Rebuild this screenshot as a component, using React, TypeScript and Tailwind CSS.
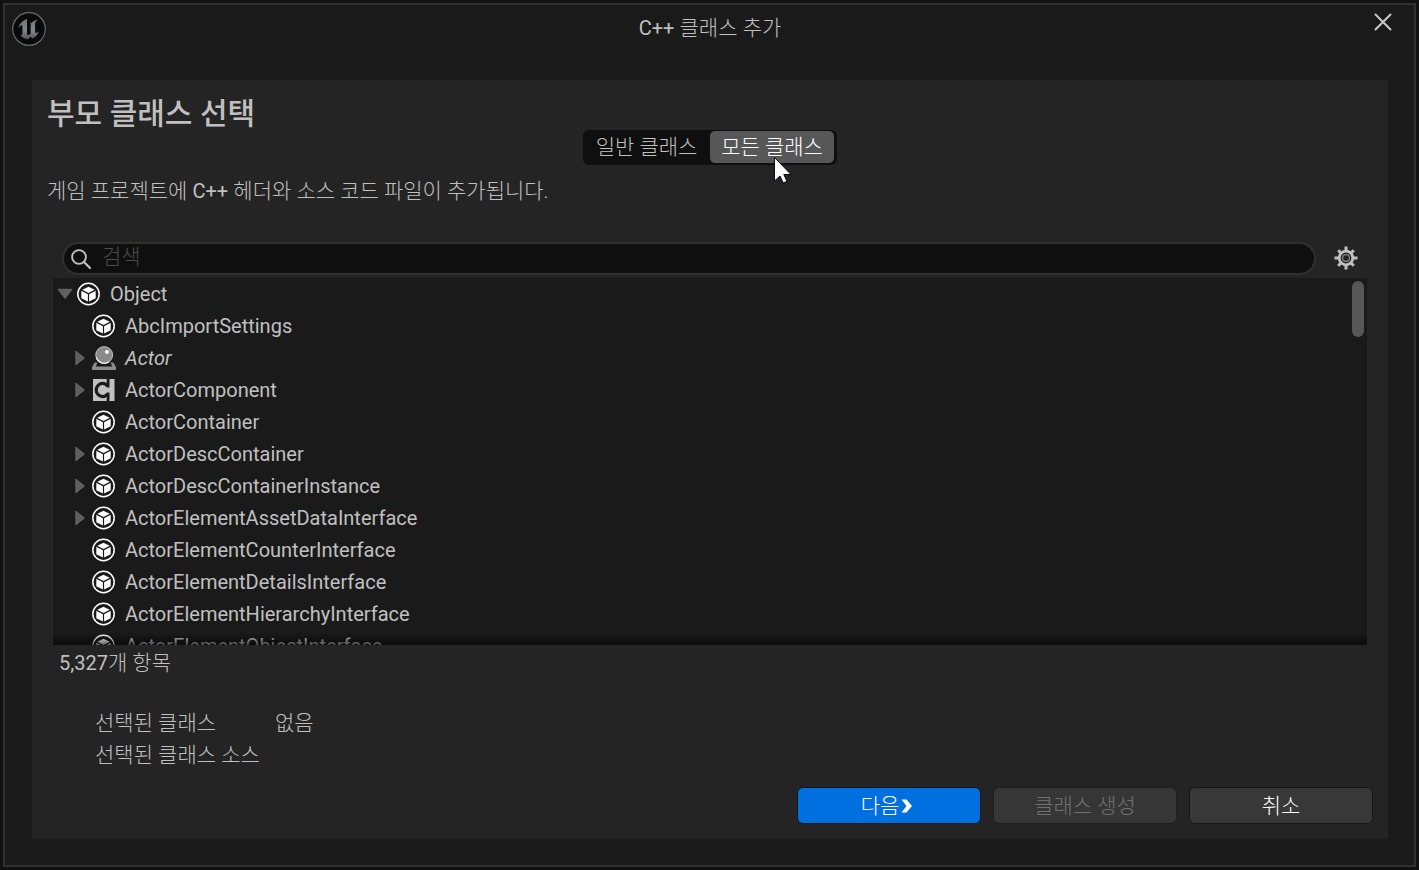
import React, { useState } from 'react';

type IconKind = 'object' | 'actor' | 'component';

interface ClassRow {
  name: string;
  icon: IconKind;
  root?: boolean;
  expandable?: boolean;
  abstract?: boolean;
}

const CLASSES: ClassRow[] = [
  { name: 'Object', icon: 'object', root: true },
  { name: 'AbcImportSettings', icon: 'object' },
  { name: 'Actor', icon: 'actor', expandable: true, abstract: true },
  { name: 'ActorComponent', icon: 'component', expandable: true },
  { name: 'ActorContainer', icon: 'object' },
  { name: 'ActorDescContainer', icon: 'object', expandable: true },
  { name: 'ActorDescContainerInstance', icon: 'object', expandable: true },
  { name: 'ActorElementAssetDataInterface', icon: 'object', expandable: true },
  { name: 'ActorElementCounterInterface', icon: 'object' },
  { name: 'ActorElementDetailsInterface', icon: 'object' },
  { name: 'ActorElementHierarchyInterface', icon: 'object' },
  { name: 'ActorElementObjectInterface', icon: 'object' },
];

function UnrealLogo() {
  return (
    <svg viewBox="0 0 34 34" className="size-[34px]" aria-hidden="true">
      <defs>
        <linearGradient id="u-metal" x1="0" y1="0" x2="0" y2="1">
          <stop offset="0" stopColor="#6d7072" />
          <stop offset="0.55" stopColor="#85888a" />
          <stop offset="1" stopColor="#55585a" />
        </linearGradient>
      </defs>
      <circle cx="17" cy="17" r="16.3" fill="#090909" stroke="#6b6b6b" strokeWidth="1.2" />
      <path
        d="M15.6 6.8C11.4 8 7.6 11.3 6.6 15.8c1-1.4 2.2-2.5 3-2.5.7 0 .9.5.9 1.3v7.1c0 1.3-.8 1.5-1.9 1.2 1.6 2.6 4.3 4 7.4 4.3l2.4-2.4 2.2 1.8c3-1.5 5.3-4 6.4-7.3-1.2 1.2-2.1 1.7-2.9 1.7-.7 0-1-.5-1-1.4v-8c0-1.3 1.3-2.9 3-3.9-2.7.2-5.2 1.3-6.800 3.200l-1.600-.5c.7.5 1 .9 1 1.800v9.400c-.8 1-1.700 1.500-2.600 1.500-.7 0-1.100-.5-1.100-1.300V10.600c0-1.500-.1-2.500.6-3.800Z"
        fill="url(#u-metal)"
      />
    </svg>
  );
}

function ObjectIcon() {
  return (
    <svg viewBox="0 0 24 24" className="size-6 shrink-0" aria-hidden="true">
      <circle cx="11.5" cy="12" r="10.7" fill="none" stroke="#fff" strokeWidth="1.5" />
      <path d="M11.5 4.700 17.700 7.700 11.500 10.900 5.300 7.700Z" fill="#fff" />
      <path d="M4.300 8.800 10.900 12.200V19.600L4.300 16.200Z" fill="#fff" />
      <path d="M18.700 8.800 12.100 12.200V19.600L18.700 16.200Z" fill="#fff" />
    </svg>
  );
}

function ActorIcon() {
  return (
    <svg viewBox="0 0 24 24" className="size-6 shrink-0" aria-hidden="true">
      <path d="M2.600 16.500H5.500L3.800 20.500H20.200L18.500 16.500H21.400L24 21V24H0V21Z" fill="#8a8a8a" />
      <circle cx="12.200" cy="9" r="8.800" fill="#8a8a8a" />
      <circle cx="12.200" cy="9" r="8.300" fill="none" stroke="#b8b8b8" strokeWidth="1" />
      <path d="M4.300 11.500A8.300 8.300 0 0 0 17 15.700" fill="none" stroke="#eee" strokeWidth="1.200" />
      <circle cx="15" cy="6" r="2" fill="#fff" />
    </svg>
  );
}

function ComponentIcon() {
  return (
    <svg viewBox="0 0 24 24" className="size-6 shrink-0" aria-hidden="true">
      <path d="M1 1H22.500V23H1Z" fill="#c0c0c0" />
      <path d="M15.500 8.200C14.100 6 12.400 5.400 10.800 5.400A6.600 6.600 0 0 0 10.800 18.600C12.700 18.600 14.400 17.800 15.500 15.800" fill="none" stroke="#1a1a1a" strokeWidth="3.200" />
      <path d="M14.700 1H17.500V9.500H14.700ZM14.700 14.500H17.500V23H14.700Z" fill="#1a1a1a" />
    </svg>
  );
}

function ClassIcon({ kind }: { kind: IconKind }) {
  if (kind === 'actor') return <ActorIcon />;
  if (kind === 'component') return <ComponentIcon />;
  return <ObjectIcon />;
}

function TreeRow({ row }: { row: ClassRow }) {
  return (
    <li className={`flex h-8 items-center ${row.root ? 'pl-1' : 'pl-5'}`}>
      <span className={`flex shrink-0 ${row.root ? 'w-5' : 'w-[19px]'}`}>
        {row.root && (
          <button type="button" aria-label={`${row.name} 접기`} className="block">
            <svg viewBox="0 0 16 12" className="h-3 w-4" aria-hidden="true">
              <path d="M1.500 1.500H14.500L8 10Z" fill="#606060" stroke="#606060" strokeWidth="1.500" strokeLinejoin="round" />
            </svg>
          </button>
        )}
        {row.expandable && (
          <button type="button" aria-label={`${row.name} 펼치기`} className="block">
            <svg viewBox="0 0 12 16" className="h-4 w-3" aria-hidden="true">
              <path d="M3 1.500V14.500L11 8Z" fill="#606060" stroke="#606060" strokeWidth="1.500" strokeLinejoin="round" />
            </svg>
          </button>
        )}
      </span>
      <ClassIcon kind={row.icon} />
      <span className={`pl-[9px] text-[20px] font-normal ${row.abstract ? 'italic' : ''}`}>{row.name}</span>
    </li>
  );
}

function GearIcon() {
  return (
    <svg viewBox="0 0 24 24" className="size-6" fill="none" stroke="#c0c0c0" aria-hidden="true">
      <circle cx="12" cy="12" r="6.800" strokeWidth="2.800" />
      <circle cx="12" cy="12" r="3.400" strokeWidth="1.200" stroke="#8a8a8a" />
      <path d="M12 0.500V5M12 19V23.500M0.500 12H5M19 12H23.500M4.200 4.200 7 7M17 17 19.800 19.800M4.200 19.800 7 17M17 7 19.800 4.200" strokeWidth="3" />
    </svg>
  );
}

function MouseCursor() {
  return (
    <svg viewBox="0 0 20 28" className="pointer-events-none absolute left-[63px] top-[25px] h-7 w-5" aria-hidden="true">
      <path d="M1.500 1.500V25L7 20L10.300 27L14 25.300L10.800 18.500H18Z" fill="#fff" stroke="#0c0c14" strokeWidth="1" />
    </svg>
  );
}

export default function App() {
  const [tab, setTab] = useState<'common' | 'all'>('all');
  const [query, setQuery] = useState('');

  return (
    <div className="h-screen min-h-[640px] bg-[#111] p-[3px] font-['Roboto','Noto_Sans_CJK_KR',sans-serif] text-[21px] leading-8 font-light text-[#c0c0c0]">
      <div className="flex h-full flex-col border-2 border-[#303030] bg-[#1a1a1a] pr-[26px] pb-[26px] pl-[27px]">
        {/* Title bar */}
        <header className="-mx-5 flex h-[75px] shrink-0 items-start justify-between pt-[7px]">
          <UnrealLogo />
          <h1>
            <span className="text-[20px] font-normal">C++</span> 클래스 추가
          </h1>
          <button type="button" aria-label="닫기" className="w-[34px] pt-px">
            <svg viewBox="0 0 18 18" className="size-[18px]" aria-hidden="true">
              <path d="M1.500 1.500 16.500 16.500M16.500 1.500 1.500 16.500" stroke="#c8c8c8" strokeWidth="2" strokeLinecap="round" />
            </svg>
          </button>
        </header>

        <main className="flex min-h-0 flex-1 flex-col bg-[#242424] px-[15px] pt-[17px] pb-[15px]">
          <h2 className="h-[33px] text-[30px] leading-[34px] font-medium">부모 클래스 선택</h2>

          {/* Class filter switch */}
          <div className="flex h-[35px] w-[254px] shrink-0 self-center rounded-md bg-[#0f0f0f] pt-px pr-[3px] pb-[2px]">
            <button type="button" aria-pressed={tab === 'common'} onClick={() => setTab('common')} className="flex-1">
              일반 클래스
            </button>
            <button
              type="button"
              aria-pressed={tab === 'all'}
              onClick={() => setTab('all')}
              className="relative w-[124px] rounded-[5px] bg-[#575757] text-white"
            >
              모든 클래스
              <MouseCursor />
            </button>
          </div>

          <p className="pt-[10px]">
            게임 프로젝트에 <span className="text-[20px] font-normal">C++</span> 헤더와 소스 코드 파일이 추가됩니다.
          </p>

          {/* Search */}
          <div className="mt-[35px] flex h-[33px] shrink-0 items-center gap-[18px] px-[15px]">
            <label className="flex h-[33px] flex-1 items-center rounded-full border-2 border-[#303030] bg-[#0f0f0f] pl-[7px]">
              <svg viewBox="0 0 20 20" className="size-5 shrink-0" fill="none" stroke="#c0c0c0" aria-hidden="true">
                <circle cx="8" cy="8" r="6.900" strokeWidth="1.900" />
                <path d="M13 13 19 19" strokeWidth="2.200" strokeLinecap="round" />
              </svg>
              <input
                type="text"
                aria-label="검색"
                placeholder="검색"
                value={query}
                onChange={(e) => setQuery(e.target.value)}
                className="h-7 min-w-0 flex-1 bg-transparent px-[11px] pb-1 outline-none placeholder:text-[#4a4a4a]"
              />
            </label>
            <button type="button" aria-label="설정" className="flex pb-px">
              <GearIcon />
            </button>
          </div>

          {/* Class tree */}
          <div className="relative mx-[6px] mt-[3px] min-h-0 flex-1 overflow-hidden bg-[#1a1a1a]">
            <ul>
              {CLASSES.map((row) => (
                <TreeRow key={row.name} row={row} />
              ))}
            </ul>
            <div className="absolute top-[3px] right-[3px] h-14 w-3 rounded-full bg-[#575757]" />
            <div className="absolute inset-x-0 bottom-0 h-3 bg-linear-to-t from-black/60 to-transparent" />
          </div>
          <p className="pt-[2px] pl-3">
            <span className="text-[20px] font-normal">5,327</span>개 항목
          </p>

          {/* Selection summary */}
          <dl className="mt-7 grid grid-cols-[180px_1fr] pl-12">
            <dt>선택된 클래스</dt>
            <dd>없음</dd>
            <dt>선택된 클래스 소스</dt>
            <dd />
          </dl>

          <footer className="mt-4 flex shrink-0 justify-end gap-3">
            <button type="button" className="flex h-[37px] w-[184px] items-center justify-center gap-[2px] rounded-md border border-[#161616] bg-[#0070e0] pr-1 text-white">
              다음
              <svg viewBox="0 0 12 14" className="h-[14px] w-3" aria-hidden="true">
                <path d="M0.500 0.500H5.500L11 7L5.500 13.500H0.500L5.500 7Z" fill="#fff" />
              </svg>
            </button>
            <button type="button" disabled className="h-[37px] w-[184px] rounded-md border border-[#1e1e1e] bg-[#363636] text-[#707070]">
              클래스 생성
            </button>
            <button type="button" className="h-[37px] w-[184px] rounded-md border border-[#161616] bg-[#383838] text-white">
              취소
            </button>
          </footer>
        </main>
      </div>
    </div>
  );
}
